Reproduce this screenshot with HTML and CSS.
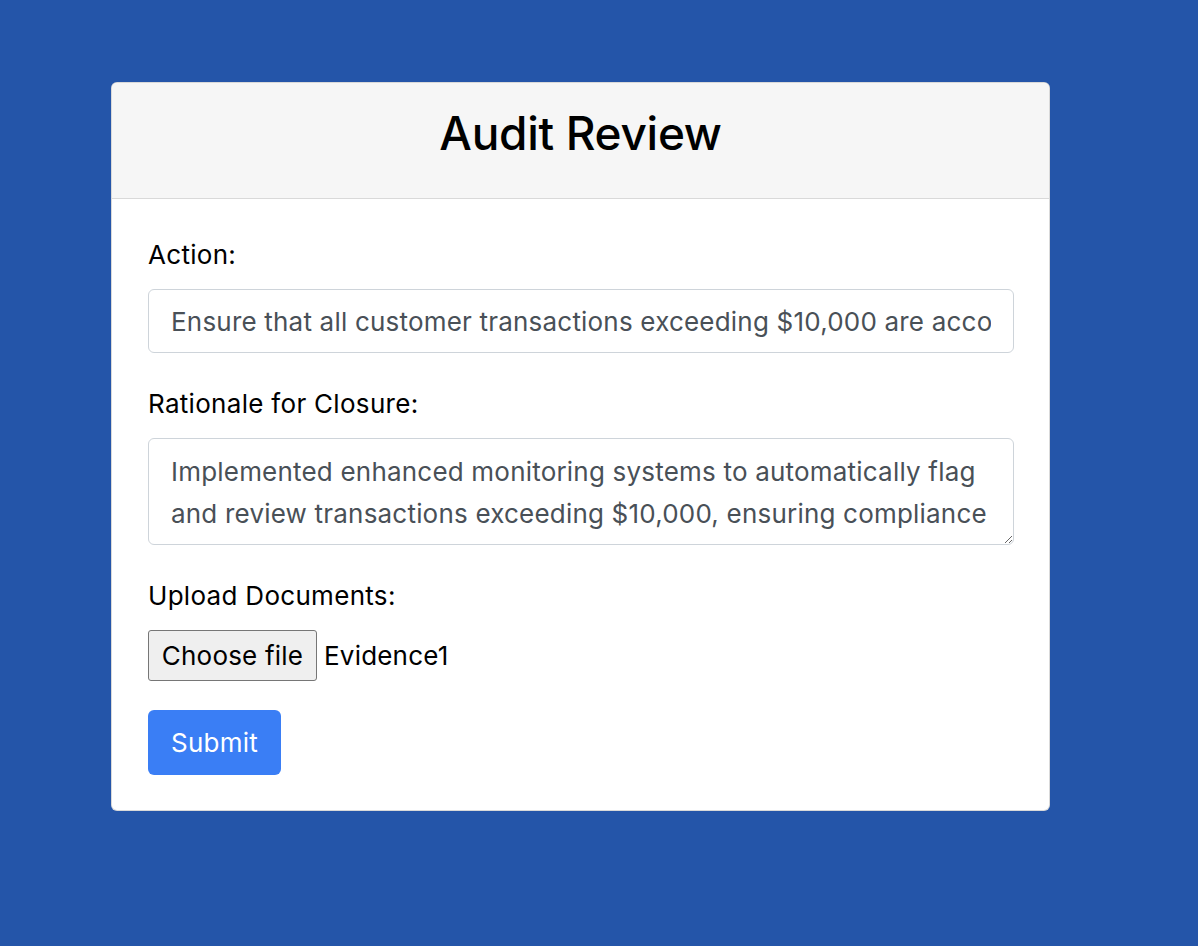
FILE: index.html
```html
<!DOCTYPE html>
<html lang="en">
<head>
<meta charset="utf-8">
<title>Audit Review</title>
<link rel="stylesheet" href="styles.css">
</head>
<body>
<div class="page">
  <div class="card">
    <div class="card-header">
      <h1 class="title">Audit Review</h1>
    </div>
    <form class="card-body">
      <div class="group">
        <label class="label" for="action">Action:</label>
        <input class="control" id="action" type="text" value="Ensure that all customer transactions exceeding $10,000 are accompanied by verified documentation.">
      </div>
      <div class="group">
        <label class="label" for="rationale">Rationale for Closure:</label>
        <textarea class="control area" id="rationale" rows="2">Implemented enhanced monitoring systems to automatically flag and review transactions exceeding $10,000, ensuring compliance with regulations.</textarea>
      </div>
      <div class="group">
        <span class="label">Upload Documents:</span>
        <div class="file-row">
          <button type="button" class="file-btn">Choose file</button>
          <span class="file-name">Evidence1</span>
        </div>
      </div>
      <button type="button" class="submit">Submit</button>
    </form>
  </div>
</div>
</body>
</html>
```

FILE: styles.css
```css
html, body {
  margin: 0;
  padding: 0;
}
body {
  background: #2455a9;
  min-height: 946px;
  font-family: Inter, "Liberation Sans", sans-serif;
  color: #000;
}
.page {
  padding: 82px 0 0 111px;
}
.card {
  width: 939px;
  background: #fff;
  border: 1px solid rgba(0,0,0,0.15);
  border-radius: 6px;
  box-sizing: border-box;
  overflow: hidden;
}
.card-header {
  background: #f6f6f6;
  border-bottom: 1px solid #d9d9d9;
  height: 115px;
  display: flex;
  align-items: center;
  justify-content: center;
}
.title {
  margin: 0 0 16px 0;
  font-size: 46px;
  font-weight: 500;
  letter-spacing: -0.3px;
}
.card-body {
  display: flex;
  flex-direction: column;
  padding: 38px 36px 35px 36px;
}
.group {
  display: flex;
  flex-direction: column;
  margin-bottom: 33px;
}
.label {
  font-size: 26px;
  letter-spacing: 0.3px;
  line-height: 36px;
  margin-bottom: 16px;
}
.control {
  font-family: inherit;
  font-size: 26px;
  letter-spacing: 0.2px;
  color: #495057;
  border: 1px solid #ced4da;
  border-radius: 6px;
  padding: 0 22px;
  height: 64px;
  box-sizing: border-box;
  width: 866px;
  background: #fff;
  outline: none;
}
.area {
  height: 107px;
  padding: 12px 22px 0 22px;
  line-height: 42px;
  resize: vertical;
  overflow: hidden;
}
.file-row {
  display: flex;
  align-items: center;
  gap: 7px;
}
.file-btn {
  font-family: inherit;
  font-size: 26px;
  letter-spacing: 0.2px;
  color: #000;
  background: #efefef;
  border: 1px solid #767676;
  border-radius: 3px;
  height: 51px;
  width: 169px;
  padding: 0;
}
.file-name {
  font-size: 26px;
  letter-spacing: 0.2px;
}
.submit {
  align-self: flex-start;
  font-family: inherit;
  font-size: 26px;
  letter-spacing: 0.2px;
  color: #fff;
  background: #3a7ef5;
  border: none;
  border-radius: 6px;
  width: 133px;
  height: 65px;
  margin-top: -4px;
}
```
